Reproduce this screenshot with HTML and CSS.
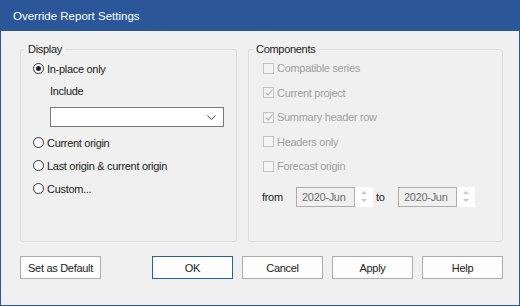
FILE: index.html
```html
<!DOCTYPE html>
<html lang="en">

<head>
    <meta charset="UTF-8">
    <title>Override Report Settings</title>
    <link rel="stylesheet" href="styles.css">
</head>

<body>
    <div class="window">
        <div class="titlebar">Override Report Settings</div>
        <div class="content">
            <div class="groups">
                <fieldset class="group display">
                    <legend>Display</legend>
                    <label class="opt"><span class="radio checked"></span>In-place only</label>
                    <div class="include">Include</div>
                    <div class="combo">
                        <svg class="chev" width="9" height="5" viewBox="0 0 9 5"><path d="M0.5 0.5 L4.5 4.5 L8.5 0.5" fill="none" stroke="#444" stroke-width="1"/></svg>
                    </div>
                    <label class="opt gap"><span class="radio"></span>Current origin</label>
                    <label class="opt"><span class="radio"></span>Last origin &amp; current origin</label>
                    <label class="opt"><span class="radio"></span>Custom...</label>
                </fieldset>

                <fieldset class="group components">
                    <legend>Components</legend>
                    <label class="chk"><span class="box"></span>Compatible series</label>
                    <label class="chk"><span class="box on"></span>Current project</label>
                    <label class="chk"><span class="box on"></span>Summary header row</label>
                    <label class="chk"><span class="box"></span>Headers only</label>
                    <label class="chk"><span class="box"></span>Forecast origin</label>
                    <div class="range">
                        <span class="from">from</span>
                        <div class="spin">
                            <span class="val">2020-Jun</span>
                            <span class="arrows"><i class="up"></i><i class="down"></i></span>
                        </div>
                        <span class="to">to</span>
                        <div class="spin">
                            <span class="val">2020-Jun</span>
                            <span class="arrows"><i class="up"></i><i class="down"></i></span>
                        </div>
                    </div>
                </fieldset>
            </div>

            <div class="buttons">
                <button class="btn">Set as Default</button>
                <div class="right">
                    <button class="btn default">OK</button>
                    <button class="btn">Cancel</button>
                    <button class="btn">Apply</button>
                    <button class="btn">Help</button>
                </div>
            </div>
        </div>
    </div>
</body>

</html>
```

FILE: styles.css
```css
html,
body {
    margin: 0;
    padding: 0;
}

body {
    font-family: "Liberation Sans", Arial, sans-serif;
    font-size: 11px;
    letter-spacing: -0.3px;
    color: #222;
}

.window {
    width: 520px;
    height: 306px;
    box-sizing: border-box;
    border: 1px solid #2b579a;
    border-top: none;
    background: #f0f0f0;
    display: flex;
    flex-direction: column;
}

.titlebar {
    height: 31px;
    margin: 0 -1px;
    padding-left: 13px;
    background: #2b579a;
    color: #fff;
    font-size: 11.5px;
    letter-spacing: 0;
    line-height: 32px;
}

.content {
    padding: 11px 16px 0 19px;
}

.groups {
    display: flex;
    gap: 11px;
}

/* group boxes */
.group {
    margin: 0;
    border: 1px solid #dcdcdc;
    border-radius: 3px;
    min-width: 0;
    height: 200px;
    box-sizing: border-box;
    padding: 0;
}

.group legend {
    padding: 0 3px;
    line-height: 14px;
}

.display {
    width: 217px;
    padding: 0 0 0 12px;
}

.display legend {
    margin-left: -8px;
}

.components {
    width: 255px;
    padding: 0 0 0 14px;
    color: #a0a0a0;
}

.components legend {
    margin-left: -10px;
    color: #222;
}

/* radios */
.opt {
    display: flex;
    align-items: center;
    height: 23px;
}

.display .opt:first-of-type {
    margin-top: 1px;
}

.opt.gap {
    margin-top: 4px;
}

.radio {
    width: 11px;
    height: 11px;
    box-sizing: border-box;
    border: 1px solid #333;
    border-radius: 50%;
    margin-right: 3px;
    position: relative;
    background: #fff;
}

.radio.checked::after {
    content: "";
    position: absolute;
    left: 2px;
    top: 2px;
    width: 5px;
    height: 5px;
    border-radius: 50%;
    background: #222;
}

.include {
    height: 22px;
    line-height: 22px;
    padding-left: 17px;
}

.combo {
    margin: 5px 0 0 17px;
    width: 174px;
    height: 20px;
    box-sizing: border-box;
    border: 1px solid #7a7a7a;
    background: #fff;
    display: flex;
    justify-content: flex-end;
    align-items: center;
}

.chev {
    margin-right: 7px;
}

/* checkboxes */
.chk {
    display: flex;
    align-items: center;
    height: 24.5px;
}

.box {
    width: 11px;
    height: 11px;
    box-sizing: border-box;
    border: 1px solid #c4c4c4;
    background: #f4f4f4;
    margin-right: 3px;
    position: relative;
}

.box.on::after {
    content: "";
    position: absolute;
    left: 3px;
    top: 0px;
    width: 3px;
    height: 6px;
    border: solid #a8a8a8;
    border-width: 0 1px 1px 0;
    transform: rotate(40deg);
}

/* from / to spinners */
.range {
    display: flex;
    align-items: center;
    margin-top: 8px;
    color: #222;
}

.from {
    width: 34px;
    margin-left: -1px;
}

.to {
    width: 25px;
    padding-left: 3px;
    box-sizing: border-box;
}

.spin {
    display: flex;
    height: 20px;
}

.val {
    width: 59px;
    box-sizing: border-box;
    border: 1px solid #adadad;
    background: #f0f0f0;
    color: #6d6d6d;
    line-height: 18px;
    padding-left: 5px;
}

.arrows {
    width: 18px;
    background: #fff;
    display: flex;
    flex-direction: column;
    align-items: center;
    justify-content: center;
    gap: 5px;
}

.arrows i {
    width: 0;
    height: 0;
    border-left: 3px solid transparent;
    border-right: 3px solid transparent;
}

.arrows .up {
    border-bottom: 3px solid #c8c8c8;
}

.arrows .down {
    border-top: 3px solid #c8c8c8;
}

/* bottom buttons */
.buttons {
    display: flex;
    justify-content: space-between;
    margin-top: 14px;
}

.right {
    display: flex;
    gap: 9px;
}

.btn {
    width: 81px;
    height: 23px;
    margin: 0;
    padding: 0;
    border: 1px solid #adadad;
    background: #fdfdfd;
    font-family: inherit;
    font-size: 11px;
    letter-spacing: -0.3px;
    color: #222;
}

.btn.default {
    border-color: #2b5f9e;
}
```
